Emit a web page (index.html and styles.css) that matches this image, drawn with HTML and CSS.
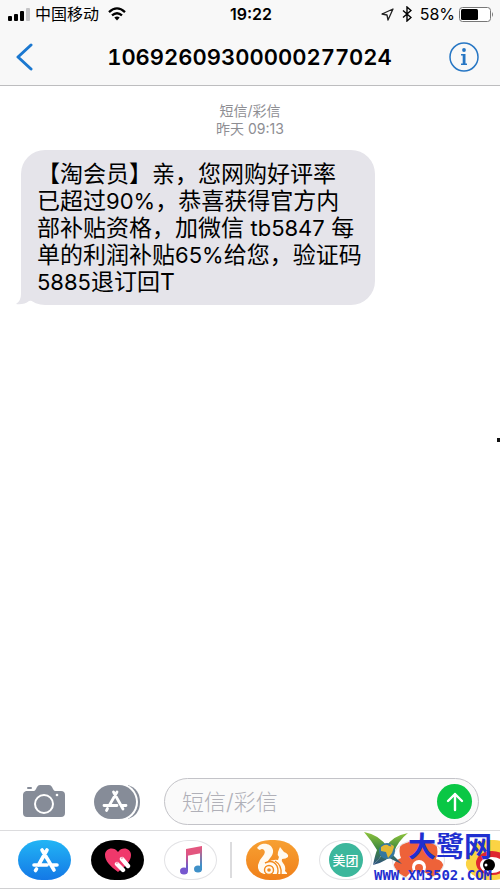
FILE: index.html
```html
<!DOCTYPE html>
<html lang="zh-CN">
<head>
    <meta charset="UTF-8">
    <meta name="viewport" content="width=device-width, initial-scale=1.0">
    <title>短信/彩信</title>
    <link rel="stylesheet" href="styles.css">
</head>
<body>

    <!-- header -->
    <header class="header">
        <div class="status">
            <div class="status-left">
                <svg class="signal" width="23" height="13" viewBox="0 0 23 13">
                    <rect x="0" y="8" width="4" height="5" rx="1"/>
                    <rect x="6" y="6" width="4" height="7" rx="1"/>
                    <rect x="12" y="3" width="4" height="10" rx="1"/>
                    <rect x="18" y="0" width="4" height="13" rx="1" fill="#c4c4c6"/>
                </svg>
                <span class="carrier">中国移动</span>
                <svg width="18" height="14" viewBox="0 0 18 14" fill="none" stroke="#000" stroke-width="2.3">
                    <path d="M1 5.2Q9-2.4 17 5.2"/>
                    <path d="M4 8.4q5-4.4 10 0"/>
                    <path d="M6.3 10.5Q9 8.3 11.7 10.5L9 13.5z" fill="#000" stroke="none"/>
                </svg>
            </div>
            <time class="clock">19:22</time>
            <div class="status-right">
                <svg width="13" height="13" viewBox="0 0 13 13" fill="none" stroke="#222" stroke-width="1.3" stroke-linejoin="round">
                    <path d="M12 1 1 6l5 1 1 5z"/>
                </svg>
                <svg width="10" height="16" viewBox="0 0 10 16" fill="none" stroke="#000" stroke-width="1.4">
                    <path d="M1 4.5l8 7-4 3.500V1l4 3.500-8 7"/>
                </svg>
                <span class="percent">58%</span>
                <svg width="35" height="15" viewBox="0 0 35 15">
                    <rect x=".5" y=".5" width="31" height="14" rx="3" fill="#fff" stroke="#777"/>
                    <rect x="2" y="2" width="17" height="11" rx="1.5"/>
                    <path d="M33 5q2 2.500 0 5z" fill="#777"/>
                </svg>
            </div>
        </div>
        <nav class="nav">
            <a class="back" href="#" aria-label="返回">
                <svg width="18" height="28" viewBox="0 0 18 28" fill="none" stroke="#1b78d0" stroke-width="3" stroke-linecap="round" stroke-linejoin="round">
                    <path d="M15 2 2 14l13 12"/>
                </svg>
            </a>
            <h1>10692609300000277024</h1>
            <button class="info" type="button" aria-label="详细信息">
                <svg width="30" height="30" viewBox="0 0 30 30" fill="#2676c4">
                    <circle cx="15" cy="15" r="14" fill="none" stroke="#2676c4" stroke-width="1.5"/>
                    <circle cx="15" cy="8" r="1.9"/>
                    <path d="M12 12h4.500v9.500H18V23h-6v-1.500h1.700v-8H12z"/>
                </svg>
            </button>
        </nav>
    </header>

    <!-- messages -->
    <main class="thread">
        <div class="stamp">
            <p>短信/彩信</p>
            <p>昨天 09:13</p>
        </div>
        <div class="bubble">
            <p>【淘会员】亲，您网购好评率<br>已超过<span class="num">90%</span>，恭喜获得官方内<br>部补贴资格，加微信 <span class="num">tb5847</span> 每<br>单的利润补贴<span class="num">65%</span>给您，验证码<br><span class="num">5885</span>退订回T</p>
            <svg class="tail" width="24" height="25" viewBox="0 0 24 25">
                <path d="M5 0v14q0 7-5 10 8 1 13-3l11-2V0z" fill="#e5e4ea"/>
            </svg>
        </div>
        <i class="speck"></i>
    </main>

    <!-- compose -->
    <form class="compose">
        <button type="button" aria-label="相机">
            <svg width="44" height="34" viewBox="0 0 44 34" fill="#868c98">
                <rect x="5" y="2" width="5" height="2" rx="1"/>
                <path d="M4 6h8q1 0 2-2l1-2q1-2 3-2h9q2 0 3 2l1 2q1 2 2 2h6q4 0 4 4v18q0 4-4 4H5q-4 0-4-4V10q0-3 3-4z"/>
                <circle cx="22" cy="19" r="9" fill="none" stroke="#fff" stroke-width="2"/>
                <circle cx="35" cy="10" r="1.3" fill="#fff"/>
            </svg>
        </button>
        <button type="button" aria-label="应用">
            <svg width="48" height="36" viewBox="0 0 48 36">
                <path d="M34 1q12 4 12 17T34 35z" fill="#868c98"/>
                <rect x="-1" y="-1" width="45" height="38" rx="19" fill="#fff"/>
                <rect x="0" y="1" width="42" height="34" rx="17" fill="#868c98"/>
                <g fill="none" stroke="#fff" stroke-width="2.8" stroke-linecap="round">
                    <path d="M23 8 15.500 21M19.500 8 29 25M10 21.500h13M28 21.500h4M13.500 24.500l-1 2"/>
                </g>
            </svg>
        </button>
        <div class="field">
            <input type="text" placeholder="短信/彩信" aria-label="短信/彩信">
            <button class="send" type="button" aria-label="发送">
                <svg width="18" height="20" viewBox="0 0 18 20" fill="none" stroke="#fff" stroke-width="2.4" stroke-linecap="round" stroke-linejoin="round">
                    <path d="M9 18V2M2 9l7-7 7 7"/>
                </svg>
            </button>
        </div>
    </form>

    <!-- app strip -->
    <footer class="apps">
        <div class="group">
            <button class="app store" type="button" aria-label="App Store">
                <svg width="30" height="28" viewBox="0 0 30 28" fill="none" stroke="#fff" stroke-width="3.6" stroke-linecap="round">
                    <path d="M17 4 8.500 19M12 4 24 24M4 19h13M22 19h5M6.500 23l-1 1.500"/>
                </svg>
            </button>
            <button class="app touch" type="button" aria-label="Digital Touch">
                <svg width="28" height="26" viewBox="0 0 28 26">
                    <path d="M14 25C6 19 1 14 1 8c0-7 9-9 13-3 4-6 13-4 13 3 0 6-5 11-13 17z" fill="#f0386b"/>
                    <g stroke="#fff" stroke-width="4.4" stroke-linecap="round">
                        <path d="M13 17l6 6M18 12l6 7"/>
                    </g>
                    <path d="M12 16.500l2-1M17 11.500l2-1" stroke="#f7a3bb" stroke-width="1.5"/>
                </svg>
            </button>
            <button class="app music" type="button" aria-label="音乐">
                <svg width="24" height="30" viewBox="0 0 24 30">
                    <defs>
                        <linearGradient id="stem" x1="0" y1="0" x2="0" y2="1">
                            <stop offset="0" stop-color="#e8557c"/>
                            <stop offset=".35" stop-color="#d0558f"/>
                            <stop offset=".8" stop-color="#6c5cc8"/>
                        </linearGradient>
                        <linearGradient id="stem2" x1="0" y1="0" x2="0" y2="1">
                            <stop offset="0" stop-color="#e8557c"/>
                            <stop offset=".8" stop-color="#3f90c8"/>
                        </linearGradient>
                    </defs>
                    <path d="M7 4 23 1v7L7 11z" fill="#e3567f"/>
                    <path d="M7 4h2v22H7z" fill="url(#stem)"/>
                    <path d="M21 2h2v23h-2z" fill="url(#stem2)"/>
                    <ellipse cx="5" cy="26" rx="4" ry="3.5" fill="#7657cf"/>
                    <ellipse cx="19" cy="24" rx="4" ry="3.5" fill="#3f90c8"/>
                </svg>
            </button>
        </div>
        <div class="divider"></div>
        <div class="group">
            <button class="app uc" type="button" aria-label="UC浏览器">
                <svg width="53" height="40" viewBox="0 0 53 40">
                    <path d="M11 9C13 2 25 2 27 10c1 6-5 9-6 13q5-4 11-3l1-3q-2-2-1-5l2-5 4 5q5 2 4 5-2 2-6 2-1 2 1 4 3 3 2 8l2 2v1H18q-7-2-6-9 1-5 5-9 3-4 1-6-2-2-4 0-3-1-3-4z" fill="#fffaf0"/>
                    <g fill="none" stroke="#f38a1c" stroke-width="1.4">
                        <path d="M19 23q8-4 12 3 2 5 0 9"/>
                        <path d="M29 21q7 4 6 13"/>
                        <circle cx="23" cy="30" r="4.5"/>
                    </g>
                    <circle cx="23" cy="30" r="1.8" fill="#f38a1c"/>
                </svg>
            </button>
            <button class="app meituan" type="button"><span>美团</span></button>
            <button class="app taobao" type="button" aria-label="应用">
                <svg width="53" height="40" viewBox="0 0 53 40">
                    <path d="M9 4Q26-2 44 4q3 8 0 15 9 2 7 11-2 8-10 9l-7-6q-8-5-16 0l-6 6Q2 37 1 29q0-8 8-11Q6 11 9 4z" fill="#ee6239"/>
                    <circle cx="27" cy="27" r="7" fill="#fff"/>
                    <circle cx="27" cy="28" r="4" fill="#ee6239"/>
                </svg>
            </button>
            <button class="app weibo" type="button" aria-label="微博">
                <svg width="53" height="40" viewBox="0 0 53 40">
                    <path d="M0 40 1 22 11 0h42v40z" fill="#fbd344"/>
                    <ellipse cx="27" cy="23" rx="16" ry="12" fill="#df2730"/>
                    <ellipse cx="27" cy="25" rx="12" ry="8" fill="#fff"/>
                    <circle cx="24" cy="25" r="6"/>
                    <circle cx="21" cy="25" r="1.5" fill="#fff"/>
                </svg>
            </button>
        </div>

        <!-- site mark over the strip -->
        <a class="mark" href="#">
            <span class="mark-top">
                <svg width="44" height="34" viewBox="0 0 44 34">
                    <defs>
                        <linearGradient id="leaf" x1="0" y1="0" x2="0" y2="1">
                            <stop offset="0" stop-color="#8fc43c"/>
                            <stop offset=".5" stop-color="#3f8a3e"/>
                            <stop offset="1" stop-color="#2d4f82"/>
                        </linearGradient>
                    </defs>
                    <path d="M0 0q16 3 23 15 6 9 15 17-13-5-19-11-4 7-10 12 2-10 4-15Q7 8 0 0z" fill="url(#leaf)"/>
                    <path d="M44 1Q28 4 22 15 18 25 9 33q14-3 21-13Q34 9 44 1z" fill="url(#leaf)"/>
                    <circle cx="23" cy="19" r="8" fill="#3578a0"/>
                    <path d="M17 15q5-4 8-1l5 1-2 6-4 5-2-6-5-1zM26 12l4 2-1 3z" fill="#e3b833"/>
                </svg>
                <span class="mark-name">大鹭网</span>
            </span>
            <span class="mark-url">WWW.XM3502.COM</span>
        </a>
    </footer>

</body>
</html>
```
FILE: styles.css
```css
*{
    box-sizing: border-box;
}

body{
    margin: 0;
    min-height: 100vh;
    display: flex;
    flex-direction: column;
    background-color: #fff;
    color: #000;
    font-family: Inter, "Noto Sans CJK SC", sans-serif;
    overflow-x: hidden;
}

button{
    padding: 0;
    border: 0;
    background: none;
    font-family: inherit;
    cursor: pointer;
}

svg{
    display: block;
    flex: none;
}

h1, p{
    margin: 0;
}

/* header */
.header{
    background-color: #f8f8f8;
    border-bottom: 1px solid #bdbdbf;
}

.status,
.nav{
    display: grid;
    grid-template-columns: 1fr auto 1fr;
    align-items: center;
}

.status{
    height: 28px;
    padding: 0 6px 0 8px;
    font-size: 16px;
    line-height: 20px;
}

.status-left,
.status-right{
    display: flex;
    align-items: center;
}

.status-left{
    gap: 4px;
}

.status-left .carrier{
    margin-right: 5px;
}

.status-right{
    justify-content: flex-end;
    gap: 8px;
}

.percent{
    margin-right: -4px;
}

.clock{
    font-weight: 600;
}

.nav{
    height: 57px;
    padding: 0 21px 0 16px;
}

.nav h1{
    padding-left: 4px;
    font-size: 22px;
    line-height: 28px;
    font-weight: 600;
    font-variant-numeric: tabular-nums;
}

.info{
    justify-self: end;
}

/* messages */
.thread{
    flex: 1;
    position: relative;
    padding: 16px 21px;
}

.stamp{
    color: #8e8e93;
    font-size: 14px;
    line-height: 18px;
    text-align: center;
}

.bubble{
    position: relative;
    width: fit-content;
    max-width: 100%;
    margin-top: 12px;
    padding: 11px 13px 9px 16px;
    border-radius: 24px;
    background-color: #e5e4ea;
    font-size: 23px;
    line-height: 27px;
}

.bubble p{
    position: relative;
    z-index: 1;
}

.num{
    font-size: 22px;
}

.tail{
    position: absolute;
    left: -5px;
    bottom: 0;
}

.speck{
    position: absolute;
    right: 0;
    top: 352px;
    width: 3px;
    height: 4px;
    background-color: #111;
}

/* compose */
.compose{
    display: flex;
    align-items: center;
    gap: 28px;
    padding: 4px 21px 5px 22px;
}

.field{
    flex: 1;
    display: flex;
    align-items: center;
    min-width: 0;
    height: 47px;
    margin-left: -6px;
    padding: 0 6px 0 17px;
    border: 1px solid #c3c3c8;
    border-radius: 24px;
    background-color: #fafafa;
}

.field input{
    flex: 1;
    min-width: 0;
    padding: 0;
    border: 0;
    outline: 0;
    background: none;
    font-family: inherit;
    font-size: 22px;
    font-weight: 300;
}

.field input::placeholder{
    color: #b0b0b8;
}

.send{
    display: flex;
    align-items: center;
    justify-content: center;
    width: 35px;
    height: 35px;
    border-radius: 50%;
    background-color: #0ac745;
}

/* app strip */
.apps{
    position: relative;
    display: flex;
    align-items: center;
    height: 59px;
    padding-left: 18px;
    border-top: 1px solid #dcdcde;
    border-bottom: 1px solid #d0d0d2;
    overflow: hidden;
}

.group{
    display: flex;
    gap: 20px;
}

.divider{
    flex: none;
    width: 2px;
    height: 36px;
    margin: 0 14px 0 13px;
    background-color: #dcdcde;
}

.app{
    flex: none;
    display: flex;
    align-items: center;
    justify-content: center;
    width: 53px;
    height: 40px;
    border-radius: 24px / 20px;
    overflow: hidden;
}

.store{
    background: linear-gradient(#22b5f5, #1478e6);
}

.touch{
    background-color: #000;
}

.music,
.meituan,
.taobao{
    border: 1px solid #e2e2e5;
    background-color: #fff;
}

.uc{
    background: linear-gradient(#f7a032, #f0801a);
}

.meituan span{
    width: 34px;
    height: 34px;
    border-radius: 50%;
    background-color: #3cb79c;
    color: #fff;
    font-size: 13px;
    line-height: 34px;
    font-weight: 500;
}

.mark{
    position: absolute;
    right: 8px;
    bottom: 5px;
    display: flex;
    flex-direction: column;
    align-items: flex-end;
    color: #1f2fd0;
    text-decoration: none;
}

.mark-top{
    display: flex;
    align-items: center;
}

.mark-name{
    padding-bottom: 4px;
    font-size: 28px;
    line-height: 32px;
    font-weight: 700;
}

.mark-url{
    font-family: "DejaVu Sans Mono", monospace;
    font-size: 14px;
    line-height: 16px;
    font-weight: 700;
}
```
